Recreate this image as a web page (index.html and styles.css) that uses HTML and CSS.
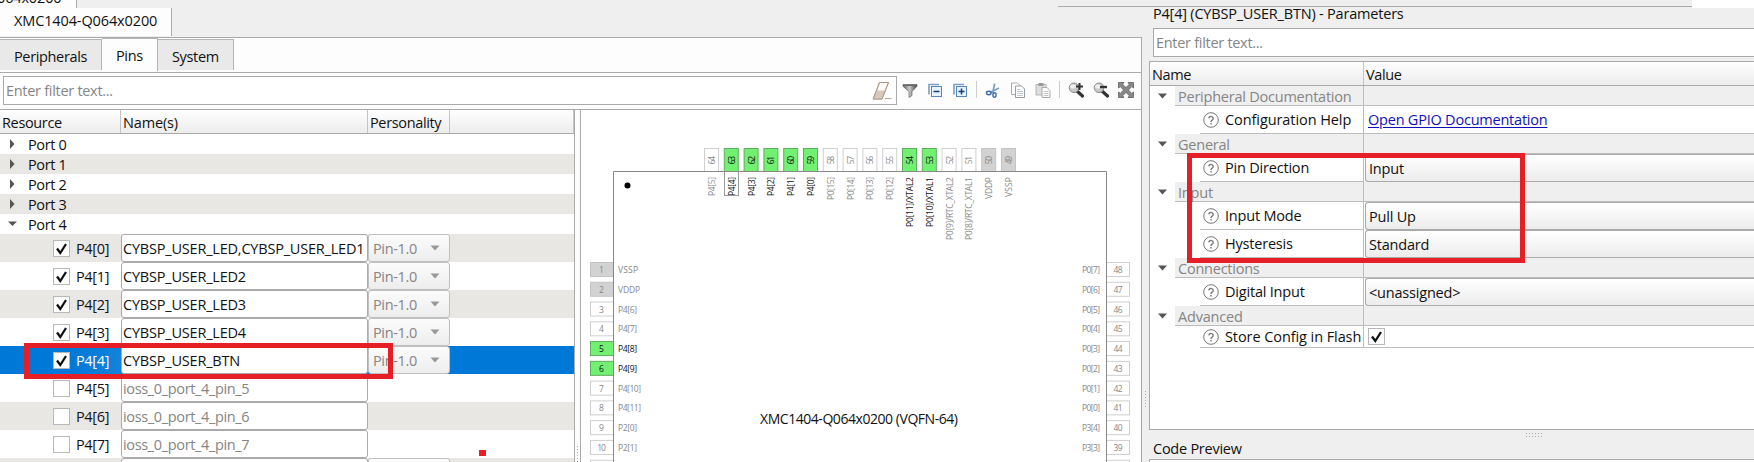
FILE: index.html
```
<!DOCTYPE html>
<html lang="en">
<head>
<meta charset="utf-8">
<title>Device Configurator</title>
<link rel="stylesheet" href="styles.css">
</head>
<body>
<div class="app">
  <main class="left">
    <div class="outer-tabs"><span class="cut-tab"><span class="t-cut">064x0200</span></span><span class="device-tab"><span class="t-dev">XMC1404-Q064x0200</span></span></div>
    <section class="device">
      <nav class="tabs">
        <span class="tab tab-per"><span class="t-per">Peripherals</span></span>
        <span class="tab tab-pins"><span class="t-pins">Pins</span></span>
        <span class="tab tab-sys"><span class="t-sys">System</span></span>
      </nav>
      <div class="toolbar">
        <div class="filter"><span class="t-filter">Enter filter text...</span>
          <svg class="eraser" width="20" height="20" viewBox="0 0 20 20"><path d="M7.5 1.5h9L10 18H1.2z" fill="#fffaf5" stroke="#b7a596"/><path d="M4.4 9.5h8.8L9.6 17.6H1.6z" fill="#d9c8ba"/><path d="M7.5 1.5h9L10 18H1.2z" fill="none" stroke="#ac998a"/><path d="M13 17.5h6.5" stroke="#b7a596"/></svg>
        </div>
        <div class="icons">
          <svg viewBox="0 0 16 16"><defs><linearGradient id="g"><stop offset="0" stop-color="#555"/><stop offset=".45" stop-color="#ccc"/><stop offset="1" stop-color="#444"/></linearGradient></defs><path d="M1 2.500h14v1.800L10 9.500v4L7 15.500v-6L1 4.300z" fill="url(#g)" stroke="#666" stroke-width=".7"/><ellipse cx="8" cy="3.200" rx="5.500" ry=".8" fill="#666"/></svg>
          <svg viewBox="0 0 16 16"><path d="M2 12.500V2.500h10" fill="none" stroke="#7c9dc8" stroke-width="1.600"/><rect x="4.500" y="4.500" width="10" height="10" fill="#e6f2fc" stroke="#5b86bb"/><path d="M6.500 9.500h6" stroke="#123f78" stroke-width="1.500"/></svg>
          <svg viewBox="0 0 16 16"><path d="M2 12.500V2.500h10" fill="none" stroke="#7c9dc8" stroke-width="1.600"/><rect x="4.500" y="4.500" width="10" height="10" fill="#e6f2fc" stroke="#5b86bb"/><path d="M6.500 9.500h6M9.500 6.500v6" stroke="#123f78" stroke-width="1.500"/></svg>
          <i class="sep"></i>
          <svg viewBox="0 0 16 16"><path d="M9.700 1.500L7.600 11M14 6L5 10.500" stroke="#7d9cc6" stroke-width="1.700"/><ellipse cx="3.800" cy="11" rx="2.300" ry="1.700" fill="none" stroke="#3c69b0" stroke-width="1.400"/><ellipse cx="9.500" cy="13" rx="1.600" ry="2.200" fill="none" stroke="#3c69b0" stroke-width="1.400"/></svg>
          <svg viewBox="0 0 16 16"><path d="M1.500 1h6l2.500 2.500v9h-8.500z" fill="#fff" stroke="#aaa"/><path d="M5.500 4h6l3 3v8.500h-9z" fill="#fff" stroke="#949ca5"/><path d="M7 7.500h3M7 9.500h6M7 11.500h6M7 13.500h6" stroke="#aeb9c4" stroke-width=".8"/></svg>
          <svg viewBox="0 0 16 16"><path d="M1 2.500h10v10.500h-10z" fill="#ddd" stroke="#b5b5b5"/><path d="M3.500 1h5v3h-5z" fill="#999"/><path d="M7 5.500h5l3 3v7h-8z" fill="#fff" stroke="#aaa"/><path d="M8.500 9.500h5M8.500 11.500h5M8.500 13.500h5" stroke="#bbb" stroke-width=".8"/></svg>
          <i class="sep"></i>
          <svg viewBox="0 0 16 16"><path d="M9 9l5.500 5" stroke="#333" stroke-width="3.200" stroke-linecap="round"/><circle cx="6" cy="5.800" r="4.800" fill="#c9c9c9" stroke="#8d8d8d"/><ellipse cx="5" cy="4.500" rx="3" ry="2" fill="#eee"/><path d="M8 4.500h7M11.500 1v7" stroke="#333" stroke-width="2"/></svg>
          <svg viewBox="0 0 16 16"><path d="M9 9l5.500 5" stroke="#333" stroke-width="3.200" stroke-linecap="round"/><circle cx="6" cy="5.800" r="4.800" fill="#c9c9c9" stroke="#8d8d8d"/><ellipse cx="5" cy="4.500" rx="3" ry="2" fill="#eee"/><path d="M7 5h7" stroke="#333" stroke-width="2.400"/></svg>
          <svg viewBox="0 0 16 16"><path d="M.500.500h5.500L4.600 2.300 8 5.600l3.400-3.300L10 .500h5.500v5.500l-1.800-1.400L10.400 8l3.300 3.400 1.800-1.400v5.500H10l1.400-1.800L8 10.400l-3.400 3.300L6 15.500H.500V10l1.800 1.400L5.600 8 2.300 4.600.500 6z" fill="#888" stroke="#5f5f5f" stroke-width=".8"/></svg>
        </div>
      </div>
      <div class="split">
        <div class="tree">
          <div class="thead"><span class="c1"><span class="t-res">Resource</span></span><span class="c2"><span class="t-names">Name(s)</span></span><span class="c3"><span class="t-pers">Personality</span></span><span class="c4"></span></div>
          <div id="rows"></div>
        </div>
        <div class="grip"></div>
        <div class="canvas"><svg id="chip" width="560" height="352" viewBox="581 110 560 352"></svg></div>
      </div>
    </section>
  </main>
  <aside class="right">
    <div class="strip"></div>
    <h1><span class="t-title">P4[4] (CYBSP_USER_BTN) - Parameters</span></h1>
    <div class="pfilter"><span class="t-filter">Enter filter text...</span></div>
    <div class="params">
      <div class="phead"><span class="pn"><span class="t-name">Name</span></span><span class="pv"><span class="t-val">Value</span></span></div>
      <div id="params"></div>
    </div>
    <h2><span class="t-code">Code Preview</span></h2>
    <div class="code"></div>
  </aside>
  <div class="edge"></div>
  <div class="mark mark-row"></div>
  <div class="mark mark-params"></div>
  <div class="dot"></div>
  <div class="dots dots-v1"></div>
  <div class="dots dots-v2"></div>
  <div class="dots dots-h"></div>
</div>
<script src="app.js"></script>
</body>
</html>
```

FILE: styles.css
```
* { box-sizing: border-box; }
body { margin: 0; font: 14.5px/20px "Open Sans", "Noto Sans", sans-serif; color: #111; background: #efefef; overflow: hidden; letter-spacing: -0.35px; }
.app { position: relative; display: flex; width: 1754px; height: 462px; overflow: hidden; white-space: nowrap; }
.left { width: 1142px; height: 462px; display: flex; flex-direction: column; }
.outer-tabs { height: 37px; position: relative; }
.cut-tab { display: block; width: 77px; height: 8px; overflow: hidden; background: #fdfdfd; border-right: 1px solid #aaa; }
.cut-tab span { display: block; margin: -12px 0 0 -3px; letter-spacing: -0.15px; }
.device-tab { display: block; width: 172px; height: 28px; padding: 3px 0 0 14px; background: #fdfdfd; border-right: 1px solid #aaa; }
.device { flex: 1; background: #fdfdfd; border-top: 1px solid #aaa; border-right: 1px solid #aaa; }
.tabs { height: 35px; display: flex; align-items: flex-start; border-bottom: 1px solid #aaa; }
.tab { display: block; height: 31px; margin-top: 1px; padding-top: 7px; background: #e9e9e9; border: solid #b5b5b5; border-width: 1px 1px 0 0; }
.tab-per { width: 102px; padding-left: 14px; }
.tab-pins { width: 56px; height: 33px; margin-top: 0; padding-left: 14px; background: #fdfdfd; }
.tab-sys { width: 76px; padding-left: 14px; }
.toolbar { height: 36px; display: flex; padding: 3px 0 0 3px; }
.filter { width: 894px; height: 29px; display: flex; justify-content: space-between; padding: 4px 2px 3px; background: #fff; border: 1px solid #aaa; color: #858585; }
.eraser { margin: 0 2px 0 0; }
.icons { display: flex; height: 27px; align-items: center; }
.icons svg { width: 16px; height: 16px; margin: 0 4.5px; }
.sep { width: 1px; height: 17px; margin: 0 3.5px; background: #ccc; }
.split { display: flex; height: 353px; }
.tree { width: 575px; border: solid #aaa; border-width: 1px 1px 0 0; background: #fff; overflow: hidden; }
.grip { width: 5px; border-top: 1px solid #aaa; }
.canvas { flex: 1; border: solid #aaa; border-width: 1px 0 0 1px; background: #fff; }
#chip { display: block; letter-spacing: 0; }
.thead, .phead { display: flex; height: 24px; background: linear-gradient(#fff, #ececec); border-bottom: 1px solid #aaa; }
.thead span[class^="c"] { border-right: 1px solid #c4c4c4; padding: 3px 0 0 2px; }
.c1 { width: 121px; }
.c2 { width: 247px; }
.c3 { width: 82px; }
.c4 { flex: 1; }
.thead .c4 { border: 0; }
.port { display: flex; height: 20px; align-items: center; background: #fff; padding-left: 8px; }
.port svg { width: 9px; height: 10px; margin-right: 11px; }
.port span { padding-top: 1px; }
.port.alt, .alt { background: #e8e7e3; }
.pin { display: flex; height: 28px; align-items: center; }
.pin .res { width: 121px; height: 28px; padding-left: 53px; display: flex; align-items: center; }
.check { flex: none; width: 17px; height: 17px; border: 1px solid #b8b8b8; background: #fff; }
.check svg { display: block; width: 15px; height: 15px; }
.res > span:last-child { margin-left: 6px; padding-top: 1px; }
.nm { width: 247px; height: 28px; padding: 4px 0 0 1px; background: #fff; border: 1px solid #aaa; border-radius: 3px; }
.nm.off { color: #858585; }
.combo { width: 82px; height: 28px; display: flex; align-items: center; justify-content: space-between; padding: 0 9px 0 4px; border: 1px solid #c0c0c0; border-radius: 3px; background: linear-gradient(#fcfcfc, #ededed); color: #858585; }
.combo span { padding-top: 1px; }
.combo svg { width: 10px; height: 6px; }
.sel { background: #0078d7; color: #fff; }
.sel .nm { color: #111; }
.sel .res { background: linear-gradient(90deg, #0078d7 55%, #1482da); }
.right { width: 612px; padding-left: 7px; }
.strip { height: 8px; margin-left: 543px; background: #fff; }
h1, h2 { margin: 0; font: inherit; padding-left: 4px; }
h1 { height: 20px; margin-top: -4px; }
.pfilter { height: 29px; margin: 4px 0 4px 4px; padding: 4px 2px 3px; background: #fff; border: 1px solid #aaa; border-right: 0; color: #858585; }
.params { height: 369px; background: #fff; border: 1px solid #aaa; border-right: 0; }
.phead span[class^="p"] { padding: 3px 0 0 2px; }
.phead .pn { width: 214px; border-right: 1px solid #c4c4c4; }
.prow { display: flex; letter-spacing: -0.2px; }
.prow.group { height: 20px; color: #858585; }
.prow.item { height: 28px; }
.prow.item.short { height: 22px; }
.prow .arrow { width: 25px; display: flex; align-items: center; justify-content: center; }
.arrow svg { width: 11px; height: 6px; }
.group .gname { width: 189px; padding: 1px 0 0 3px; background: #efefef; border: solid #bdbdbd; border-width: 0 1px 1px 0; line-height: 19px; }
.group .gval { flex: 1; background: #efefef; border-bottom: 1px solid #bdbdbd; }
.iname { width: 164px; margin-left: 50px; padding-left: 3px; display: flex; align-items: center; gap: 6px; border: solid #bdbdbd; border-width: 0 1px 1px 0; }
.iname span { padding-top: 1px; }
.iname svg { flex: none; width: 16px; height: 16px; }
.ival { flex: 1; border-bottom: 1px solid #bdbdbd; display: flex; align-items: center; padding-left: 4px; }
.ival > span:not(.check) { padding-top: 1px; }
.ival.drop { border: solid #aaa; border-width: 1px 0 1px 1px; border-radius: 3px 0 0 3px; background: linear-gradient(#fff, #ececec); margin-left: 1px; padding-left: 3px; }
.link { color: #1010b8; text-decoration: underline; text-underline-offset: 2px; letter-spacing: -0.22px; }
h2 { height: 29px; padding-top: 9px; }
.code { height: 3px; background: #fff; border: solid #aaa; border-width: 1px 0 0 1px; }
.t-dev { letter-spacing: -0.12px; }
.t-title { letter-spacing: -0.2px; }
.t-filter { letter-spacing: -0.29px; }
.t-names { letter-spacing: -0.15px; }
.t-two, .t-led { letter-spacing: -0.2px; }
.t-g1, .t-g2, .t-g4 { letter-spacing: -0.23px; }
.t-p1, .t-p6 { letter-spacing: -0.08px; }
.t-code { letter-spacing: -0.25px; }
.edge { position: absolute; left: 1058px; top: 6px; width: 634px; height: 1px; background: #aaa; }
.mark { position: absolute; border: 5px solid #e61e25; }
.mark-row { left: 24px; top: 343px; width: 369px; height: 36px; }
.mark-params { left: 1187px; top: 153px; width: 338px; height: 110px; }
.dot { position: absolute; left: 479px; top: 450px; width: 7px; height: 6px; background: #e61e25; }
.dots { position: absolute; background: radial-gradient(circle, #aaa 0.6px, transparent 0.8px) 0 0 / 3px 3px; }
.dots-v1 { left: 576px; top: 445px; width: 3px; height: 17px; }
.dots-v2 { left: 1144px; top: 390px; width: 4px; height: 17px; }
.dots-h { left: 1525px; top: 432px; width: 18px; height: 5px; }
```

FILE: app.js
```
const tick = '<svg viewBox="0 0 15 15"><path d="M3 7.5L6.300 12 12 3" fill="none" stroke="#111" stroke-width="2.300"/></svg>';
const down = color => `<svg viewBox="0 0 10 6"><path d="M.5.500h9L5 5.500z" fill="${color}"/></svg>`;
const help = '<svg viewBox="0 0 16 16"><circle cx="8" cy="8" r="7.300" fill="#fff" stroke="#777"/><path d="M5.800 6.400a2.200 2 0 1 1 3.300 1.800Q8 8.800 8 10M8 11v1.600" fill="none" stroke="#777" stroke-width="1.400"/></svg>';

// Resource tree
let html = '';
for (let i = 0; i < 5; i++) {
  const path = i < 4 ? 'M2 0v10l4.500-5z' : 'M0 2.500h9L4.500 7z';
  html += `<div class="port${i % 2 ? ' alt' : ''}"><svg viewBox="0 0 9 10"><path d="${path}" fill="#555"/></svg><span class="t-port">Port ${i}</span></div>`;
}
const names = ['CYBSP_USER_LED,CYBSP_USER_LED1', 'CYBSP_USER_LED2', 'CYBSP_USER_LED3', 'CYBSP_USER_LED4', 'CYBSP_USER_BTN'];
for (let i = 0; i < 9; i++) {
  const on = i < 5;
  const label = on ? names[i] : i < 8 ? `ioss_0_port_4_pin_${i}` : '';
  const combo = on || i === 8 ? `<div class="combo">${on ? '<span class="t-ver">Pin-1.0</span>' + down('#999') : ''}</div>` : '';
  const res = i < 8 ? `<span class="check">${on ? tick : ''}</span><span class="t-pin">P4[${i}]</span>` : '';
  html += `<div class="pin${i === 4 ? ' sel' : i % 2 ? '' : ' alt'}"><div class="res">${res}</div><div class="nm${on ? '' : ' off'}"><span class="${i === 0 ? 't-two' : on ? 't-led' : 't-ioss'}">${label}</span></div>${combo}</div>`;
}
document.getElementById('rows').innerHTML = html;

// Parameter table
const group = (name, cls) => `<div class="prow group"><span class="arrow">${down('#555')}</span><span class="gname"><span class="${cls}">${name}</span></span><span class="gval"></span></div>`;
const item = (name, cls, value, kind = '') => `<div class="prow item ${kind === 'short' ? 'short' : ''}"><span class="iname">${help}<span class="${cls}">${name}</span></span><span class="ival ${kind}">${value}</span></div>`;
document.getElementById('params').innerHTML =
  group('Peripheral Documentation', 't-g1') +
  item('Configuration Help', 't-p1', '<span class="link t-link">Open GPIO Documentation</span>') +
  group('General', 't-g2') +
  item('Pin Direction', 't-p2', '<span class="t-v1">Input</span>', 'drop') +
  group('Input', 't-g3') +
  item('Input Mode', 't-p3', '<span class="t-v2">Pull Up</span>', 'drop') +
  item('Hysteresis', 't-p4', '<span class="t-v3">Standard</span>', 'drop') +
  group('Connections', 't-g4') +
  item('Digital Input', 't-p5', '<span class="t-v4">&lt;unassigned&gt;</span>', 'drop') +
  group('Advanced', 't-g5') +
  item('Store Config in Flash', 't-p6', `<span class="check">${tick}</span>`, 'short');

// Package drawing
const look = {
  on: { fill: '#72f072', stroke: '#5fae5f', text: '#111' },
  off: { fill: '#fff', stroke: '#cfcfcf', text: '#888' },
  power: { fill: '#d2d2d2', stroke: '#c4c4c4', text: '#888' }
};
const text = (x, y, s, len, color, anchor = 'start') => `<text x="${x}" y="${y}" font-size="8.5" fill="${color}" text-anchor="${anchor}" textLength="${len}">${s}</text>`;
let chip = '';
const step = 19.8;
const north = [['P4[5]', 19], ['P4[4]', 19, 'on'], ['P4[3]', 19, 'on'], ['P4[2]', 19, 'on'], ['P4[1]', 19, 'on'], ['P4[0]', 19, 'on'], ['P0[15]', 23], ['P0[14]', 23], ['P0[13]', 23], ['P0[12]', 23], ['P0[11]/XTAL2', 50, 'on'], ['P0[10]/XTAL1', 50, 'on'], ['P0[9]/RTC_XTAL2', 63], ['P0[8]/RTC_XTAL1', 63], ['VDDP', 22, 'power'], ['VSSP', 20, 'power']];
north.forEach(([label, len, kind = 'off'], i) => {
  const x = 704.5 + i * step, k = look[kind];
  chip += `<rect x="${x}" y="148.500" width="14" height="23" fill="${k.fill}" stroke="${k.stroke}"/>`;
  chip += `<g transform="translate(${x + 10.5} 160) rotate(-90)">${text(0, 0, 64 - i, 8.5, k.text, 'middle')}</g>`;
  chip += `<g transform="translate(${x + 10.5} 177) rotate(-90)">${text(0, 0, label, len, k.text, 'end')}</g>`;
});
chip += '<rect x="724.500" y="171.500" width="14" height="24" fill="none" stroke="#999"/>';
const west = [['VSSP', 20, 'power'], ['VDDP', 22, 'power'], ['P4[6]', 19], ['P4[7]', 19], ['P4[8]', 19, 'on'], ['P4[9]', 19, 'on'], ['P4[10]', 23], ['P4[11]', 23], ['P2[0]', 19], ['P2[1]', 19], ['', 0]];
west.forEach(([label, len, kind = 'off'], i) => {
  const y = 262.5 + i * 19.77, k = look[kind];
  chip += `<rect x="590.500" y="${y}" width="23" height="14" fill="${k.fill}" stroke="${k.stroke}"/>`;
  if (label) chip += text(601.5, y + 10.5, i + 1, i > 8 ? 8.5 : 4.6, k.text, 'middle') + text(618, y + 10.5, label, len, k.text);
});
['P0[7]', 'P0[6]', 'P0[5]', 'P0[4]', 'P0[3]', 'P0[2]', 'P0[1]', 'P0[0]', 'P3[4]', 'P3[3]', ''].forEach((label, i) => {
  const y = 262.5 + i * 19.77;
  chip += `<rect x="1106.500" y="${y}" width="23" height="14" fill="#fff" stroke="#cfcfcf"/>`;
  if (label) chip += text(1118, y + 10.5, 48 - i, 9, '#888', 'middle') + text(1100, y + 10.5, label, 18, '#888', 'end');
});
chip += '<path d="M613.500 462V171.500h493V462" fill="none" stroke="#888"/><circle cx="627.500" cy="185.500" r="3"/>';
chip += '<text x="760" y="424" font-size="14" fill="#111" textLength="198">XMC1404-Q064x0200 (VQFN-64)</text>';
document.getElementById('chip').innerHTML = chip;
```
